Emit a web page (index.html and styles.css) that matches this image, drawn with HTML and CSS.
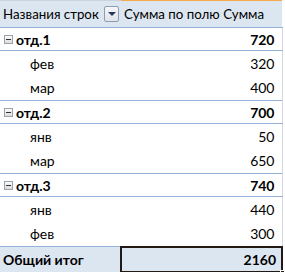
FILE: index.html
```html
<!DOCTYPE html>
<html lang="ru">
<head>
    <meta charset="UTF-8">
    <title>Сводная таблица</title>
    <link rel="stylesheet" href="styles.css">
</head>
<body>
    <table class="pivot">
        <thead>
            <tr class="pivot-head">
                <th class="col-label">
                    <div class="label-wrap">
                        <span>Названия строк</span>
                        <span class="filter-btn"><span class="filter-arrow"></span></span>
                    </div>
                </th>
                <th class="col-value">Сумма по полю Сумма</th>
            </tr>
        </thead>
        <tbody>
            <tr class="group">
                <td><span class="toggle"></span>отд.1</td>
                <td class="num">720</td>
            </tr>
            <tr class="item"><td>фев</td><td class="num">320</td></tr>
            <tr class="item"><td>мар</td><td class="num">400</td></tr>
            <tr class="group">
                <td><span class="toggle"></span>отд.2</td>
                <td class="num">700</td>
            </tr>
            <tr class="item"><td>янв</td><td class="num">50</td></tr>
            <tr class="item"><td>мар</td><td class="num">650</td></tr>
            <tr class="group">
                <td><span class="toggle"></span>отд.3</td>
                <td class="num">740</td>
            </tr>
            <tr class="item"><td>янв</td><td class="num">440</td></tr>
            <tr class="item"><td>фев</td><td class="num">300</td></tr>
        </tbody>
        <tfoot>
            <tr class="total">
                <td>Общий итог</td>
                <td class="num selected">2160<span class="fill-handle"></span></td>
            </tr>
        </tfoot>
    </table>
</body>
</html>
```

FILE: styles.css
```css
* {
    box-sizing: border-box;
}

body {
    margin: 0;
    background: #fff;
    font-family: Lato, "Open Sans", sans-serif;
    font-size: 14px;
    color: #000;
}

.pivot {
    border-collapse: collapse;
    width: 283px;
    table-layout: fixed;
}

.pivot td,
.pivot th {
    padding: 0 7px 0 3px;
    white-space: nowrap;
}

.col-label {
    width: 121px;
}

.pivot-head th {
    height: 27px;
    background: #dce6f1;
    border-top: 1px solid #c9d3de;
    border-bottom: 1px solid #95b3d7;
    font-size: 13.3px;
    font-weight: normal;
    text-align: left;
}

.pivot-head .col-value {
    border-top: 1px solid #f7a84a;
}

.label-wrap {
    display: flex;
    align-items: center;
    justify-content: space-between;
}

.filter-btn {
    width: 15px;
    height: 16px;
    border: 1px solid #8e9cb0;
    border-radius: 2px;
    background: linear-gradient(#f4f6f9, #dfe4ea);
    display: flex;
    align-items: center;
    justify-content: center;
    margin-right: -5px;
}

.filter-arrow {
    width: 0;
    height: 0;
    border-left: 4px solid transparent;
    border-right: 4px solid transparent;
    border-top: 4px solid #24365a;
}

/* right grid line of the sheet, seen next to the value column */
.pivot tbody td:last-child {
    border-right: 1px solid #d0d7e5;
}

.group td {
    height: 23px;
    font-weight: bold;
    border-top: 1px solid #95b3d7;
    border-bottom: 1px solid #95b3d7;
}

.group td:first-child {
    padding-left: 4px;
}

.toggle {
    display: inline-block;
    width: 9px;
    height: 9px;
    border: 1px solid #9aa3ad;
    background: linear-gradient(#fbfbfb, #dcdcdc);
    margin-right: 3px;
    position: relative;
    top: -1px;
}

.toggle::after {
    content: "";
    position: absolute;
    left: 1px;
    top: 3px;
    width: 5px;
    height: 1px;
    background: #333;
}

.item td {
    height: 25px;
}

.item td:first-child {
    padding-left: 30px;
}

.num {
    text-align: right;
}

.pivot th.col-value {
    text-align: left;
    padding-left: 3px;
}

.total td {
    height: 25px;
    font-weight: bold;
    background: #dce6f1;
    border-top: 1px solid #95b3d7;
}

.total td.selected {
    position: relative;
    border: 2px solid #221a12;
    padding-right: 5px;
}

/* small square in the corner of the active cell */
.fill-handle {
    position: absolute;
    right: -4px;
    bottom: -4px;
    width: 5px;
    height: 5px;
    background: #221a12;
    border: 1px solid #fff;
}
```
